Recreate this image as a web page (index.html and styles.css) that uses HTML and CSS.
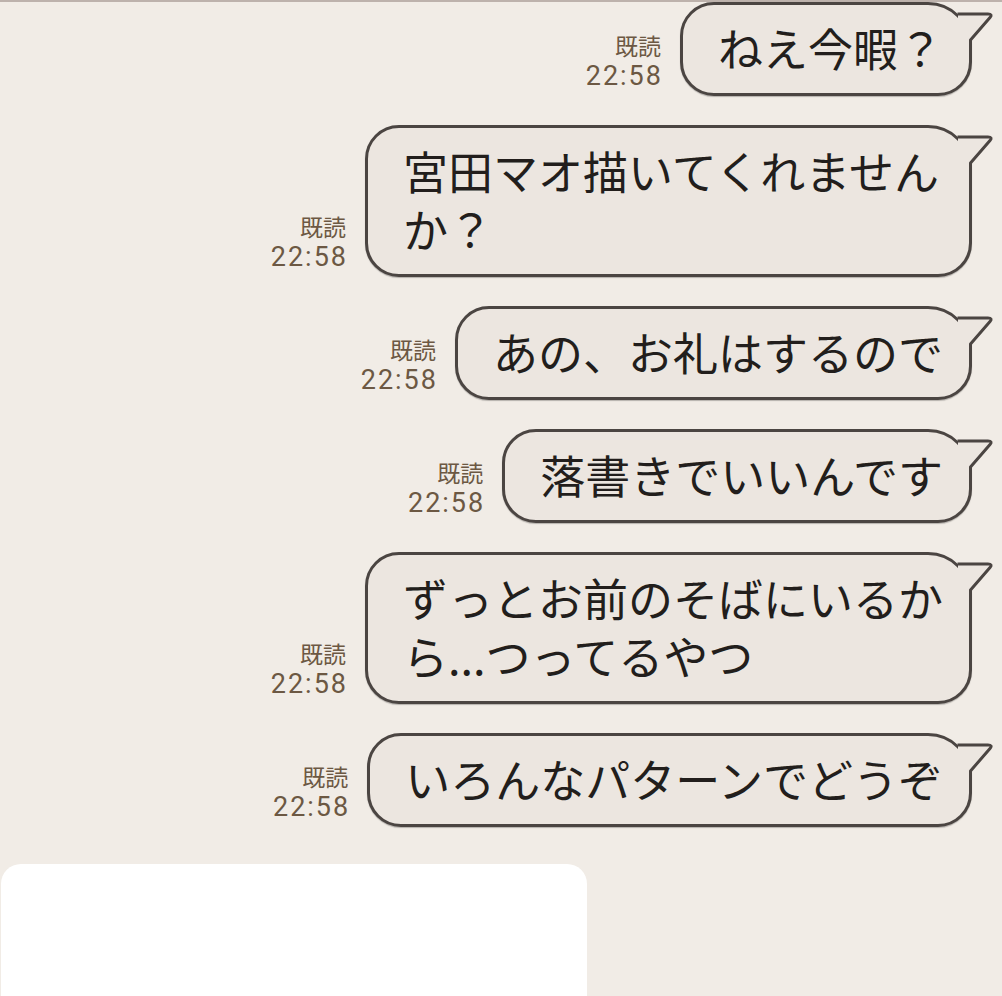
FILE: index.html
```html
<!DOCTYPE html>
<html lang="ja">
<head>
    <meta charset="UTF-8">
    <meta name="viewport" content="width=device-width, initial-scale=1.0">
    <title>トーク</title>
    <link rel="stylesheet" href="styles.css">
</head>
<body>
    <!--トーク履歴-->
    <main class="chat">
        <div class="row">
            <div class="meta"><span class="read">既読</span><span class="clock">22:58</span></div>
            <div class="bubble">ねえ今暇？<svg class="tail" viewBox="-20 0 44 52"><path class="tail-fill" d="M-14 10.5H16L21 13L-3 40V52H-14Z"/><path class="tail-line" d="M-14.5 12H16Q21 12 18 15.5L-1.5 38V52"/></svg></div>
        </div>
        <div class="row">
            <div class="meta"><span class="read">既読</span><span class="clock">22:58</span></div>
            <div class="bubble">宮田マオ描いてくれませんか？<svg class="tail" viewBox="-20 0 44 52"><path class="tail-fill" d="M-14 10.5H16L21 13L-3 40V52H-14Z"/><path class="tail-line" d="M-14.5 12H16Q21 12 18 15.5L-1.5 38V52"/></svg></div>
        </div>
        <div class="row">
            <div class="meta"><span class="read">既読</span><span class="clock">22:58</span></div>
            <div class="bubble">あの、お礼はするので<svg class="tail" viewBox="-20 0 44 52"><path class="tail-fill" d="M-14 10.5H16L21 13L-3 40V52H-14Z"/><path class="tail-line" d="M-14.5 12H16Q21 12 18 15.5L-1.5 38V52"/></svg></div>
        </div>
        <div class="row">
            <div class="meta"><span class="read">既読</span><span class="clock">22:58</span></div>
            <div class="bubble">落書きでいいんです<svg class="tail" viewBox="-20 0 44 52"><path class="tail-fill" d="M-14 10.5H16L21 13L-3 40V52H-14Z"/><path class="tail-line" d="M-14.5 12H16Q21 12 18 15.5L-1.5 38V52"/></svg></div>
        </div>
        <div class="row">
            <div class="meta"><span class="read">既読</span><span class="clock">22:58</span></div>
            <div class="bubble">ずっとお前のそばにいるから...つってるやつ<svg class="tail" viewBox="-20 0 44 52"><path class="tail-fill" d="M-14 10.5H16L21 13L-3 40V52H-14Z"/><path class="tail-line" d="M-14.5 12H16Q21 12 18 15.5L-1.5 38V52"/></svg></div>
        </div>
        <div class="row">
            <div class="meta"><span class="read">既読</span><span class="clock">22:58</span></div>
            <div class="bubble">いろんなパターンでどうぞ<svg class="tail" viewBox="-20 0 44 52"><path class="tail-fill" d="M-14 10.5H16L21 13L-3 40V52H-14Z"/><path class="tail-line" d="M-14.5 12H16Q21 12 18 15.5L-1.5 38V52"/></svg></div>
        </div>
    </main>

    <!--下のパネル-->
    <div class="panel"></div>
</body>
</html>
```

FILE: styles.css
```css
/*基本*/
body {
    margin: 0;
    padding: 0;
    height: 996px;
    overflow: hidden;
    background-color: #f1ece6;
    border-top: 2px solid #bdb2ac;
    box-sizing: border-box;
    font-family: "Noto Sans CJK JP", sans-serif;
}

.chat {
    display: flex;
    flex-direction: column;
    align-items: flex-end;
    gap: 29px;
    padding-right: 30px;
}

.row {
    display: flex;
    align-items: flex-end;
    gap: 19px;
}

/*既読と時間*/
.meta {
    display: flex;
    flex-direction: column;
    align-items: flex-end;
    margin-bottom: 4px;
    color: #6c5843;
}

.read {
    font-size: 23px;
    line-height: 30px;
}

.clock {
    font-family: Roboto, "Noto Sans CJK JP", sans-serif;
    font-size: 27px;
    line-height: 32px;
    letter-spacing: 2px;
    margin-right: -2px;
}

/*吹き出し*/
.bubble {
    position: relative;
    max-width: 540px;
    padding: 14px 26px 16px 35px;
    background-color: #ece6e0;
    border: 3px solid #4b4542;
    border-radius: 34px 44px 34px 34px;
    box-shadow: 0 1px 1px rgba(0, 0, 0, 0.25);
    color: #221e1c;
    font-size: 45px;
    line-height: 58px;
}

.tail {
    position: absolute;
    top: -3px;
    right: -27px;
    width: 44px;
    height: 52px;
    overflow: visible;
}

.tail-fill {
    fill: #ece6e0;
}

.tail-line {
    fill: none;
    stroke: #4b4542;
    stroke-width: 3;
    stroke-linejoin: round;
}

.panel {
    width: 586px;
    height: 132px;
    margin: 37px 0 0 1px;
    background-color: #ffffff;
    border-radius: 20px 20px 0 0;
}
```
